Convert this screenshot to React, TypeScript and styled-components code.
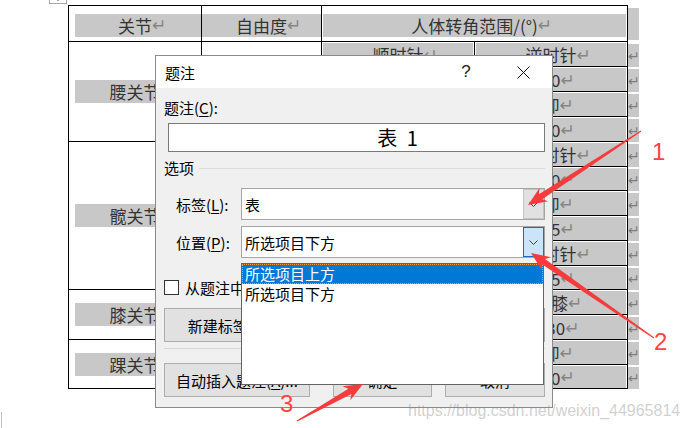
import styled, { createGlobalStyle } from 'styled-components';

const GlobalStyle = createGlobalStyle`
  html, body {
    margin: 0;
    padding: 0;
    background: #fff;
  }
  body {
    font-family: "Noto Sans CJK SC", "Noto Sans", sans-serif;
  }
`;

const ui = `"Noto Sans CJK SC", "Noto Sans", sans-serif`;
const ROWS = '36px 25px 25px 25px 25px 25px 24px 25px 25px 25px 24px 25px 25px 25px 24px';

const joints = [
  { name: '腰关节', span: 4, dof: '3' },
  { name: '髋关节', span: 6, dof: '3' },
  { name: '膝关节', span: 2, dof: '1' },
  { name: '踝关节', span: 2, dof: '1' },
];

const angles: [string, string][] = [
  ['顺时针', '逆时针'],
  ['30', '30'],
  ['俯', '仰'],
  ['90', '30'],
  ['顺时针', '逆时针'],
  ['45', '40'],
  ['俯', '仰'],
  ['120', '45'],
  ['顺时针', '逆时针'],
  ['45', '45'],
  ['伸膝', '屈膝'],
  ['0', '130'],
  ['俯', '仰'],
  ['20', '30'],
];

const Page = styled.div`
  position: relative;
  width: 690px;
  height: 428px;
  box-sizing: border-box;
  padding: 5px 0 0 68px;
  display: flex;
  align-items: flex-start;
  overflow: hidden;
  background: #fff;
`;

const Table = styled.div`
  display: grid;
  grid-template-columns: 133px 120px 153px 153px;
  grid-template-rows: ${ROWS};
  border-top: 1px solid #000;
  border-left: 1px solid #000;
  font-family: ${ui};
  font-size: 17px;
  color: #333;
`;

const Cell = styled.div<{ $col: string; $row: string; $pad: string }>`
  grid-column: ${(p) => p.$col};
  grid-row: ${(p) => p.$row};
  padding: ${(p) => p.$pad};
  border-right: 1px solid #000;
  border-bottom: 1px solid #000;
  display: flex;
  align-items: center;
  min-width: 0;
`;

const Shade = styled.div<{ $h?: number; $inset?: number }>`
  flex: 1;
  align-self: ${(p) => (p.$h ? 'center' : 'stretch')};
  height: ${(p) => (p.$h ? `${p.$h}px` : 'auto')};
  padding-right: ${(p) => p.$inset ?? 0}px;
  background: #c8c8c8;
  display: flex;
  align-items: center;
  justify-content: center;
  white-space: nowrap;
`;

const Ret = styled.span`
  display: inline-block;
  width: 0;
  color: #858585;
  font-family: "DejaVu Sans", sans-serif;
  font-size: 17px;
  white-space: nowrap;
`;

const Marks = styled.div`
  display: grid;
  grid-template-rows: 37px ${ROWS.replace('36px ', '')};
  width: 11px;
`;

const MarkBand = styled.div<{ $first?: boolean }>`
  margin: ${(p) => (p.$first ? '3px 0 2px' : '2px 0 0')};
  background: #c8c8c8;
  color: #7d7d7d;
  font-family: "DejaVu Sans", sans-serif;
  font-size: 14px;
  display: flex;
  align-items: center;
  overflow: hidden;
`;

const Handle = styled.div`
  position: absolute;
  left: 49px;
  top: -12px;
  width: 18px;
  height: 16px;
  box-sizing: border-box;
  border: 1px solid #a8a8a8;
  background: #fff;
  display: flex;
  align-items: center;
  justify-content: center;
`;

const EdgeMark = styled.div`
  position: absolute;
  left: 1px;
  top: 412px;
  width: 1px;
  height: 16px;
  background: #bdbdbd;
`;

const Dialog = styled.div`
  position: absolute;
  left: 155px;
  top: 55px;
  width: 398px;
  height: 353px;
  box-sizing: border-box;
  border: 1px solid #8a8a8a;
  background: #f0f0f0;
  display: flex;
  flex-direction: column;
  font-family: ${ui};
  font-size: 15px;
  color: #000;
`;

const TitleBar = styled.div`
  height: 37px;
  background: #fff;
  display: flex;
  align-items: center;
  padding: 0 17px 0 9px;
`;

const Title = styled.div`
  flex: 1;
`;

const HelpButton = styled.div`
  width: 20px;
  text-align: center;
  font-family: "Liberation Sans", sans-serif;
  font-size: 17px;
  color: #222;
`;

const CloseButton = styled.div`
  width: 24px;
  margin-left: 35px;
  display: flex;
  justify-content: center;
`;

const Body = styled.div`
  flex: 1;
  display: flex;
  flex-direction: column;
  padding: 10px 7px 10px 8px;
`;

const Line = styled.div`
  line-height: 20px;
  white-space: nowrap;
`;

const Key = styled.span`
  text-decoration: underline;
  text-underline-offset: 2px;
`;

const CaptionBox = styled.div`
  margin: 5px 0 0 4px;
  height: 29px;
  box-sizing: border-box;
  border: 1px solid #7a7a7a;
  background: #fff;
  font-size: 20px;
  line-height: 27px;
  text-align: center;
  padding-left: 82px;
  word-spacing: 5px;
`;

const Section = styled.div`
  margin-top: 6px;
  display: flex;
  align-items: center;
  line-height: 20px;

  &::after {
    content: '';
    flex: 1;
    height: 1px;
    background: #dcdcdc;
    margin-left: 5px;
  }
`;

const FormRow = styled.div<{ $gap: number }>`
  margin-top: ${(p) => p.$gap}px;
  display: flex;
  align-items: center;
  padding-left: 12px;
`;

const RowLabel = styled.div`
  width: 65px;
  white-space: nowrap;
`;

const Combo = styled.div`
  flex: 1;
  height: 32px;
  box-sizing: border-box;
  border: 1px solid #a5a5a5;
  background: #fff;
  display: flex;
`;

const ComboText = styled.div`
  flex: 1;
  padding-left: 3px;
  display: flex;
  align-items: center;
`;

const ComboButton = styled.div<{ $active?: boolean }>`
  width: 21px;
  box-sizing: border-box;
  border: 1px solid ${(p) => (p.$active ? '#1a6fc0' : '#c4c4c4')};
  background: ${(p) => (p.$active ? '#cce4f7' : '#e1e1e1')};
  display: flex;
  align-items: center;
  justify-content: center;
`;

const CheckRow = styled.div`
  margin-top: 19px;
  display: flex;
  align-items: center;
  gap: 6px;
  white-space: nowrap;
`;

const CheckBox = styled.div`
  width: 15px;
  height: 15px;
  box-sizing: border-box;
  border: 1px solid #333;
  background: #fff;
`;

const ButtonRow = styled.div<{ $gap: number }>`
  margin-top: ${(p) => p.$gap}px;
  display: flex;
  justify-content: space-between;
`;

const ButtonGroup = styled.div`
  display: flex;
  gap: 13px;
`;

const Button = styled.div<{ $w: number }>`
  width: ${(p) => p.$w}px;
  height: 34px;
  box-sizing: border-box;
  border: 1px solid #adadad;
  background: #e1e1e1;
  display: flex;
  align-items: center;
  justify-content: center;
  white-space: nowrap;
`;

const Divider = styled.div`
  margin-top: 6px;
  height: 1px;
  background: #d8d8d8;
`;

const DropList = styled.div`
  position: absolute;
  left: 85px;
  top: 207px;
  width: 303px;
  height: 122px;
  box-sizing: border-box;
  border: 1px solid #646464;
  background: #fff;
`;

const ListItem = styled.div<{ $selected?: boolean }>`
  height: 20px;
  line-height: 20px;
  padding-left: 3px;
  white-space: nowrap;
  background: ${(p) => (p.$selected ? '#0078d7' : 'transparent')};
  color: ${(p) => (p.$selected ? '#fff' : '#000')};
  outline: ${(p) => (p.$selected ? '1px dotted #f0a040' : 'none')};
  outline-offset: -1px;
`;

const Overlay = styled.svg`
  position: absolute;
  left: 0;
  top: 0;
  pointer-events: none;
`;

const Callout = styled.span<{ $x: number; $y: number }>`
  position: absolute;
  left: ${(p) => p.$x}px;
  top: ${(p) => p.$y}px;
  font-family: "Liberation Sans", Arial, sans-serif;
  font-size: 24px;
  line-height: 1;
  color: #ff4444;
`;

const Watermark = styled.div`
  position: absolute;
  left: 408px;
  top: 403px;
  font-family: "Liberation Sans", Arial, sans-serif;
  font-size: 16px;
  line-height: 16px;
  color: rgba(140, 140, 140, 0.42);
  white-space: nowrap;
`;

function arrowPoints(tx: number, ty: number, hx: number, hy: number) {
  const dx = hx - tx;
  const dy = hy - ty;
  const len = Math.hypot(dx, dy);
  const ux = dx / len;
  const uy = dy / len;
  const nx = -uy;
  const ny = ux;
  const head = 19;
  const wing = 8;
  const shaft = 3;
  const tail = 0.6;
  const bx = hx - ux * head;
  const by = hy - uy * head;
  const p = (x: number, y: number) => `${x.toFixed(1)},${y.toFixed(1)}`;
  return [
    p(tx + nx * tail, ty + ny * tail),
    p(bx + ux * 4 + nx * shaft, by + uy * 4 + ny * shaft),
    p(bx + nx * wing, by + ny * wing),
    p(hx, hy),
    p(bx - nx * wing, by - ny * wing),
    p(bx + ux * 4 - nx * shaft, by + uy * 4 - ny * shaft),
    p(tx - nx * tail, ty - ny * tail),
  ].join(' ');
}

const Chevron = () => (
  <svg width="9" height="5" viewBox="0 0 9 5">
    <path d="M0.5 0.5 L4.5 4.5 L8.5 0.5" fill="none" stroke="#404040" strokeWidth="1" />
  </svg>
);

export default function App() {
  let start = 2;
  const jointCells = joints.map((j) => {
    const row = `${start} / span ${j.span}`;
    start += j.span;
    return { ...j, row };
  });

  return (
    <>
      <GlobalStyle />
      <Page>
        <Handle>
          <svg width="10" height="10" viewBox="0 0 10 10">
            <path d="M5 0 V10 M0 5 H10" stroke="#555" strokeWidth="1" />
          </svg>
        </Handle>

        <Table>
          <Cell $col="1" $row="1" $pad="3px 0 0 6px">
            <Shade $h={23} $inset={6}>关节<Ret>↵</Ret></Shade>
          </Cell>
          <Cell $col="2" $row="1" $pad="3px 0 0 0">
            <Shade $h={23}>自由度<Ret>↵</Ret></Shade>
          </Cell>
          <Cell $col="3 / 5" $row="1" $pad="3px 1px 0 1px">
            <Shade $h={23}>人体转角范围/(°)<Ret>↵</Ret></Shade>
          </Cell>

          {jointCells.map((j) => (
            <Cell key={j.name} $col="1" $row={j.row} $pad="0 0 0 6px">
              <Shade $h={23} $inset={6}>{j.name}<Ret>↵</Ret></Shade>
            </Cell>
          ))}
          {jointCells.map((j) => (
            <Cell key={`dof-${j.name}`} $col="2" $row={j.row} $pad="0">
              <Shade $h={23}>{j.dof}<Ret>↵</Ret></Shade>
            </Cell>
          ))}

          {angles.map(([cw, ccw], i) => [
            <Cell key={`cw-${i}`} $col="3" $row={`${i + 2}`} $pad="1px 1px 0 1px">
              <Shade>{cw}<Ret>↵</Ret></Shade>
            </Cell>,
            <Cell key={`ccw-${i}`} $col="4" $row={`${i + 2}`} $pad="1px 1px 0 1px">
              <Shade>{ccw}<Ret>↵</Ret></Shade>
            </Cell>,
          ])}
        </Table>

        <Marks>
          <MarkBand $first />
          {angles.map((_, i) => (
            <MarkBand key={i}>↵</MarkBand>
          ))}
        </Marks>

        <Dialog>
          <TitleBar>
            <Title>题注</Title>
            <HelpButton>?</HelpButton>
            <CloseButton>
              <svg width="13" height="13" viewBox="0 0 13 13">
                <path d="M0.5 0.5 L12.5 12.5 M12.5 0.5 L0.5 12.5" stroke="#111" strokeWidth="1" />
              </svg>
            </CloseButton>
          </TitleBar>

          <Body>
            <Line>
              题注(<Key>C</Key>):
            </Line>
            <CaptionBox>表 1</CaptionBox>

            <Section>选项</Section>

            <FormRow $gap={10}>
              <RowLabel>
                标签(<Key>L</Key>):
              </RowLabel>
              <Combo>
                <ComboText>表</ComboText>
                <ComboButton>
                  <Chevron />
                </ComboButton>
              </Combo>
            </FormRow>

            <FormRow $gap={6}>
              <RowLabel>
                位置(<Key>P</Key>):
              </RowLabel>
              <Combo>
                <ComboText>所选项目下方</ComboText>
                <ComboButton $active>
                  <Chevron />
                </ComboButton>
              </Combo>
            </FormRow>

            <CheckRow>
              <CheckBox />
              <span>
                从题注中排除标签(<Key>E</Key>)
              </span>
            </CheckRow>

            <ButtonRow $gap={10}>
              <Button $w={141}>
                新建标签(<Key>N</Key>)...
              </Button>
              <ButtonGroup>
                <Button $w={113}>
                  删除标签(<Key>D</Key>)
                </Button>
                <Button $w={100}>
                  编号(<Key>U</Key>)...
                </Button>
              </ButtonGroup>
            </ButtonRow>

            <Divider />

            <ButtonRow $gap={14}>
              <Button $w={146}>
                自动插入题注(<Key>A</Key>)...
              </Button>
              <ButtonGroup>
                <Button $w={99}>确定</Button>
                <Button $w={100}>取消</Button>
              </ButtonGroup>
            </ButtonRow>
          </Body>

          <DropList>
            <ListItem $selected>所选项目上方</ListItem>
            <ListItem>所选项目下方</ListItem>
          </DropList>
        </Dialog>

        <Overlay width="690" height="428" viewBox="0 0 690 428">
          <polygon points={arrowPoints(641, 131, 528, 205)} fill="#f53b3b" />
          <polygon points={arrowPoints(654, 338, 531, 253)} fill="#f53b3b" />
          <polygon points={arrowPoints(297, 421, 363, 384)} fill="#f53b3b" />
        </Overlay>
        <Callout $x={652} $y={140}>1</Callout>
        <Callout $x={654} $y={330}>2</Callout>
        <Callout $x={280} $y={392}>3</Callout>

        <Watermark>https://blog.csdn.net/weixin_44965814</Watermark>
        <EdgeMark />
      </Page>
    </>
  );
}
